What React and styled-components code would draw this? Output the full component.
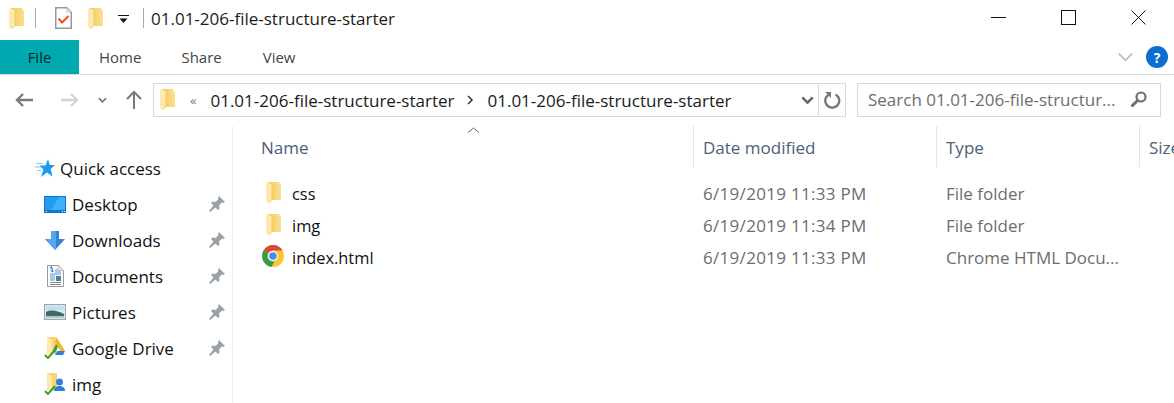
import React from 'react';
import styled, { createGlobalStyle } from 'styled-components';

const GlobalStyle = createGlobalStyle`
  html, body { margin: 0; padding: 0; background: #fff; }
  body { font-family: "Open Sans", "Noto Sans", sans-serif; overflow: hidden; }
`;

const Window = styled.div`
  width: 1174px;
  height: 403px;
  overflow: hidden;
  background: #fff;
  display: flex;
  flex-direction: column;
`;

const TitleBar = styled.div`
  height: 40px;
  display: flex;
  align-items: center;
  flex: none;
`;

const QuickTools = styled.div`
  display: flex;
  align-items: center;
  padding-left: 9px;
  margin-top: -4px;
`;

const ToolDivider = styled.span`
  width: 1px;
  height: 20px;
  background: #a8a8a8;
  margin: ${p => p.$margin};
`;

const Spacer = styled.span`
  width: ${p => p.$w}px;
  flex: none;
`;

const DropArrow = styled.svg`
  margin-left: 15px;
  margin-top: 3px;
`;

const WindowTitle = styled.div`
  font-size: 17px;
  color: #1c1c1c;
  margin-left: 7px;
  margin-top: -4px;
  flex: 1;
  white-space: nowrap;
`;

const WindowButtons = styled.div`
  display: flex;
  align-items: center;
  gap: 55px;
  padding-right: 28px;
  margin-top: -5px;
`;

const RibbonTabs = styled.div`
  height: 34px;
  display: flex;
  flex: none;
  align-items: center;
  border-bottom: 1px solid #dadbdc;
`;

const FileTab = styled.div`
  width: 79px;
  height: 34px;
  background: #00a8b0;
  color: #10282c;
  font-size: 15px;
  display: flex;
  align-items: center;
  justify-content: center;
  margin-right: 20px;
`;

const RibbonTab = styled.div`
  font-size: 15px;
  color: #444;
  margin-right: ${p => p.$gap}px;
`;

const RibbonRight = styled.div`
  margin-left: auto;
  display: flex;
  align-items: center;
  gap: 12px;
  padding-right: 6px;
`;

const HelpBadge = styled.div`
  width: 22px;
  height: 22px;
  border-radius: 50%;
  background: #0a6fd0;
  color: #fff;
  font-size: 14px;
  font-weight: 700;
  display: flex;
  align-items: center;
  justify-content: center;
`;

const NavRow = styled.div`
  height: 51px;
  flex: none;
  display: flex;
  align-items: center;
  padding-bottom: 2px;
  box-sizing: border-box;
`;

const NavButtons = styled.div`
  display: flex;
  align-items: center;
  width: 153px;
  padding-left: 14px;
  box-sizing: border-box;
`;

const UpArrow = styled.svg`
  margin-left: 19px;
`;

const AddressBox = styled.div`
  width: 693px;
  height: 34px;
  box-sizing: border-box;
  border: 1px solid #d9d9d9;
  display: flex;
  align-items: center;
  padding-left: 6px;
`;

const Crumb = styled.span`
  font-size: 17px;
  color: #1a1a1a;
  white-space: nowrap;
  padding-top: 1px;
`;

const CrumbOverflow = styled.span`
  font-size: 13px;
  color: #777;
  margin: 0 14px 0 15px;
`;

const CrumbSeparator = styled.svg`
  margin: 0 13px;
`;

const AddressEnd = styled.div`
  margin-left: auto;
  display: flex;
  align-items: center;
  height: 100%;
`;

const RefreshCell = styled.div`
  width: 26px;
  height: 100%;
  border-left: 1px solid #d9d9d9;
  display: flex;
  align-items: center;
  justify-content: center;
  margin-left: 4px;
`;

const SearchBox = styled.div`
  width: 304px;
  height: 34px;
  margin-left: 11px;
  box-sizing: border-box;
  border: 1px solid #d9d9d9;
  display: flex;
  align-items: center;
  justify-content: space-between;
  padding: 0 13px 0 10px;
  font-size: 17px;
  color: #6d6d6d;
  white-space: nowrap;
`;

const Body = styled.div`
  flex: 1;
  display: flex;
  min-height: 0;
`;

const Sidebar = styled.div`
  width: 233px;
  flex: none;
  box-sizing: border-box;
  border-right: 1px solid #f0f0f0;
  padding-top: 24px;
`;

const NavItem = styled.div`
  height: 36px;
  display: flex;
  align-items: center;
  padding-left: ${p => p.$indent}px;
  padding-right: 7px;
  font-size: 17px;
  color: #111;
  white-space: nowrap;
`;

const NavIcon = styled.span`
  width: ${p => p.$w}px;
  display: flex;
  justify-content: center;
  flex: none;
  margin-right: ${p => p.$gap || 0}px;
`;

const PinSlot = styled.span`
  margin-left: auto;
  display: flex;
`;

const Content = styled.div`
  flex: 1;
  position: relative;
  min-width: 0;
`;

const Columns = styled.div`
  display: grid;
  grid-template-columns: 460px 243px 203px 40px;
`;

const HeaderCell = styled.div`
  height: 41px;
  display: flex;
  align-items: center;
  padding-left: ${p => p.$pad}px;
  padding-top: 2px;
  font-size: 17px;
  color: #4c607a;
  box-sizing: border-box;
  white-space: nowrap;
  overflow: hidden;
  border-left: ${p => (p.$line ? '1px solid #e5e5e5' : 'none')};
`;

const SortCaret = styled.svg`
  position: absolute;
  left: 234px;
  top: 1px;
`;

const Rows = styled.div`
  margin-top: 10px;
`;

const FileRow = styled.div`
  display: grid;
  grid-template-columns: 460px 243px 203px 40px;
  height: 32px;
  align-items: center;
  font-size: 16.4px;
  white-space: nowrap;
`;

const NameCell = styled.div`
  display: flex;
  align-items: center;
  padding-left: 29px;
  color: #111;
`;

const RowIcon = styled.span`
  width: 22px;
  margin: -2px 8px 0 0;
  display: flex;
  justify-content: center;
  flex: none;
`;

const DateCell = styled.div`
  padding-left: 10px;
  color: #6d6d6d;
  font-size: 17px;
  letter-spacing: 0.3px;
`;

const TypeCell = styled.div`
  padding-left: 10px;
  color: #6d6d6d;
  font-size: 17px;
`;

const Folder = () => (
  <svg width="15" height="21" viewBox="0 0 15 21">
    <defs>
      <linearGradient id="folderBack" x1="0" y1="0" x2="1" y2="0">
        <stop offset="0" stopColor="#f2c95c" />
        <stop offset="1" stopColor="#fbe08f" />
      </linearGradient>
    </defs>
    <path d="M1 0h12.500v2.500H15V18H5.500V3z" fill="url(#folderBack)" />
    <path d="M0 .5L6 3.500V17.500L2.500 21 0 19z" fill="#fde9ae" />
    <path d="M6 3.500V17.500L2.500 21" fill="none" stroke="#eac560" strokeWidth=".8" />
  </svg>
);

const ChecklistDoc = () => (
  <svg width="17" height="22" viewBox="0 0 17 22">
    <path d="M.75.75h11l4.500 4.500v16H.75z" fill="#fff" stroke="#979797" strokeWidth="1.500" />
    <path d="M11.750.75v4.500h4.500z" fill="#e4e4e4" stroke="#bbb" strokeWidth=".6" />
    <path d="M3.500 11.500L7 15.500 13.500 9" fill="none" stroke="#e8551f" strokeWidth="2" />
  </svg>
);

const Pin = () => (
  <svg width="16" height="16" viewBox="0 0 16 16">
    <path d="M10 0l6 6-2 1-1-.500-3 3 .500 3-1.500 1.500-2.500-2.500L1 16l-1-1 4.500-5.500L2 7l1.500-1.500 3 .500 3-3L9 2z" fill="#98a0a8" />
  </svg>
);

const Star = () => (
  <svg width="20" height="18" viewBox="0 0 20 18">
    <path d="M1 4.500h7M0 8h6M2 11.500h4" stroke="#8cc9f3" strokeWidth="1" />
    <path d="M13 0l1.800 6H20l-4.300 4 1.800 7.500-5.500-4-6 4.500 2.400-7.500-3.900-4h6z" fill="#1c9bef" />
  </svg>
);

const DesktopIcon = () => (
  <svg width="22" height="17" viewBox="0 0 22 17">
    <rect width="22" height="17" fill="#0f77cf" />
    <path d="M1 1h20v13H1z" fill="#1f9df4" />
    <path d="M15 1h6v13H7z" fill="#49b4fa" opacity=".8" />
    <path d="M2 15.500h1M18 15.500h1M20 15.500h1" stroke="#fff" />
  </svg>
);

const DownloadsIcon = () => (
  <svg width="20" height="19" viewBox="0 0 20 19">
    <path d="M6 0h8v8h6L10 19 0 8h6z" fill="#2f83d8" />
    <path d="M6 0h5v19L0 8h6z" fill="#57a6ec" />
  </svg>
);

const DocumentsIcon = () => (
  <svg width="17" height="22" viewBox="0 0 17 22">
    <path d="M.5.500h11l5 5v16H.5z" fill="#fff" stroke="#9a9a9a" />
    <path d="M11.500.500v5h5z" fill="#e6e6e6" stroke="#aaa" strokeWidth=".6" />
    <path d="M3 3l1.500-1L6 7M3.500 6h3" fill="none" stroke="#2c7fd6" strokeWidth="1.200" />
    <path d="M8 5h3M8 7h6M3 9h11" stroke="#3f93dc" />
    <path d="M3 11h5M3 13h5M3 15h5" stroke="#4a94d8" />
    <path d="M9 11h5v5H9z" fill="#4f7f92" />
    <path d="M3 17.500h11M3 19.500h11" stroke="#8a8a8a" />
  </svg>
);

const PicturesIcon = () => (
  <svg width="22" height="16" viewBox="0 0 22 16">
    <rect x=".5" y=".5" width="21" height="15" fill="#d8e9f5" stroke="#a3a3a3" />
    <path d="M2 2h18v4H2z" fill="#c3ddf1" />
    <path d="M2 8c5-2.500 11-1.500 18 2v2H2z" fill="#3c6d5c" />
    <path d="M2 12h18v2H2z" fill="#a9c8d3" />
  </svg>
);

const SyncFolder = ({ badge }) => (
  <svg width="22" height="22" viewBox="0 0 22 22">
    <path d="M3 0h10v17H3z" fill="#f6d470" />
    <path d="M3 0l5 3v15l-5-2z" fill="#fdeaa8" />
    {badge === 'drive' ? (
      <>
        <path d="M13 1l8 13h-4.500L11 5z" fill="#f4b81f" />
        <path d="M11 18l2.500-4H21l-2 4z" fill="#2f7fe0" />
        <path d="M9 13l3-6 2 3-3 6z" fill="#30a14e" />
      </>
    ) : (
      <>
        <circle cx="15.500" cy="9" r="3.500" fill="#2f7fe0" />
        <path d="M10 18c0-3.500 2.500-5 5.500-5s5.500 1.500 5.500 5z" fill="#2f7fe0" />
      </>
    )}
    <path d="M1 18l3 3 7-8" fill="none" stroke="#3ea324" strokeWidth="2" />
  </svg>
);

const ChromeIcon = () => (
  <svg width="22" height="22" viewBox="0 0 22 22">
    <circle cx="11" cy="11" r="11" fill="#fbc62f" />
    <path d="M11 0a11 11 0 0 1 9.530 5.500H11a5.500 5.500 0 0 0-5 3.200L2.200 4.500A11 11 0 0 1 11 0z" fill="#d9483b" />
    <path d="M2.200 4.500L6 8.700a5.500 5.500 0 0 0 6.500 7.600L9.500 21.900A11 11 0 0 1 2.200 4.500z" fill="#2f9e4f" />
    <circle cx="11" cy="11" r="5" fill="#fff" />
    <circle cx="11" cy="11" r="3.800" fill="#4a8af0" />
  </svg>
);

const Chevron = ({ w = 10, h = 6, color = '#777', sw = 2 }) => (
  <svg width={w} height={h} viewBox="0 0 10 6">
    <path d="M1 1l4 4 4-4" fill="none" stroke={color} strokeWidth={sw} />
  </svg>
);

const Arrow = ({ color, flip }) => (
  <svg width="20" height="16" viewBox="0 0 20 16" style={flip ? { transform: 'scaleX(-1)' } : undefined}>
    <path d="M19 8H3M9 2L3 8l6 6" fill="none" stroke={color} strokeWidth="2.400" />
  </svg>
);

const navItems = [
  { label: 'Desktop', icon: <DesktopIcon />, pin: true },
  { label: 'Downloads', icon: <DownloadsIcon />, pin: true },
  { label: 'Documents', icon: <DocumentsIcon />, pin: true },
  { label: 'Pictures', icon: <PicturesIcon />, pin: true },
  { label: 'Google Drive', icon: <SyncFolder badge="drive" />, pin: true },
  { label: 'img', icon: <SyncFolder badge="user" /> },
];

const files = [
  { name: 'css', date: '6/19/2019 11:33 PM', type: 'File folder', icon: <Folder /> },
  { name: 'img', date: '6/19/2019 11:34 PM', type: 'File folder', icon: <Folder /> },
  { name: 'index.html', date: '6/19/2019 11:33 PM', type: 'Chrome HTML Docu...', icon: <ChromeIcon /> },
];

export default function App() {
  return (
    <Window>
      <GlobalStyle />
      <TitleBar>
        <QuickTools>
          <Folder />
          <ToolDivider $margin="0 19px 0 11px" />
          <ChecklistDoc />
          <Spacer $w={16} />
          <Folder />
          <DropArrow width="11" height="9" viewBox="0 0 11 9">
            <path d="M0 .5h11" stroke="#111" />
            <path d="M1.500 3.500h8L5.500 8z" fill="#111" />
          </DropArrow>
          <ToolDivider $margin="0 0 0 14px" />
        </QuickTools>
        <WindowTitle>01.01-206-file-structure-starter</WindowTitle>
        <WindowButtons>
          <svg width="15" height="2"><rect width="15" height="1" fill="#111" /></svg>
          <svg width="15" height="15"><rect x=".5" y=".5" width="14" height="14" fill="none" stroke="#111" /></svg>
          <svg width="15" height="15"><path d="M.5.500l14 14M14.500.500l-14 14" stroke="#111" /></svg>
        </WindowButtons>
      </TitleBar>

      <RibbonTabs>
        <FileTab>File</FileTab>
        <RibbonTab $gap={40}>Home</RibbonTab>
        <RibbonTab $gap={41}>Share</RibbonTab>
        <RibbonTab $gap={0}>View</RibbonTab>
        <RibbonRight>
          <Chevron w={17} h={10} color="#bbb" sw={1} />
          <HelpBadge>?</HelpBadge>
        </RibbonRight>
      </RibbonTabs>

      <NavRow>
        <NavButtons>
          <Arrow color="#7a7a7a" />
          <Spacer $w={26} />
          <Arrow color="#d4d4d4" flip />
          <Spacer $w={18} />
          <Chevron w={9} h={6} color="#7a7a7a" />
          <UpArrow width="16" height="19" viewBox="0 0 16 19">
            <path d="M8 19V2M1 9l7-7 7 7" fill="none" stroke="#7a7a7a" strokeWidth="2" />
          </UpArrow>
        </NavButtons>
        <AddressBox>
          <Folder />
          <CrumbOverflow>«</CrumbOverflow>
          <Crumb>01.01-206-file-structure-starter</Crumb>
          <CrumbSeparator width="7" height="10" viewBox="0 0 7 10">
            <path d="M1 1l4 4-4 4" fill="none" stroke="#333" strokeWidth="1.500" />
          </CrumbSeparator>
          <Crumb>01.01-206-file-structure-starter</Crumb>
          <AddressEnd>
            <Chevron w={13} h={8} color="#666" sw={2} />
            <RefreshCell>
              <svg width="18" height="18" viewBox="0 0 18 18">
                <path d="M6 3.500a7 7 0 1 0 6.500 0" fill="none" stroke="#7a7a7a" strokeWidth="2.400" />
                <path d="M2 1h6v6z" fill="#7a7a7a" />
              </svg>
            </RefreshCell>
          </AddressEnd>
        </AddressBox>
        <SearchBox>
          Search 01.01-206-file-structur...
          <svg width="17" height="17" viewBox="0 0 17 17">
            <circle cx="11" cy="6" r="4.500" fill="none" stroke="#6f6f6f" strokeWidth="2.200" />
            <path d="M7.500 9.500L1.500 15.500" stroke="#6f6f6f" strokeWidth="3" />
          </svg>
        </SearchBox>
      </NavRow>

      <Body>
        <Sidebar>
          <NavItem $indent={35}>
            <NavIcon $w={20} $gap={5}><Star /></NavIcon>
            Quick access
          </NavItem>
          {navItems.map(item => (
            <NavItem key={item.label} $indent={44}>
              <NavIcon $w={22} $gap={6}>{item.icon}</NavIcon>
              {item.label}
              {item.pin && <PinSlot><Pin /></PinSlot>}
            </NavItem>
          ))}
        </Sidebar>
        <Content>
          <SortCaret width="13" height="6" viewBox="0 0 13 6">
            <path d="M1 5.500L6.500 1 12 5.500" fill="none" stroke="#666" />
          </SortCaret>
          <Columns>
            <HeaderCell $pad={28}>Name</HeaderCell>
            <HeaderCell $pad={9} $line>Date modified</HeaderCell>
            <HeaderCell $pad={9} $line>Type</HeaderCell>
            <HeaderCell $pad={9} $line>Size</HeaderCell>
          </Columns>
          <Rows>
            {files.map(f => (
              <FileRow key={f.name}>
                <NameCell>
                  <RowIcon>{f.icon}</RowIcon>
                  {f.name}
                </NameCell>
                <DateCell>{f.date}</DateCell>
                <TypeCell>{f.type}</TypeCell>
              </FileRow>
            ))}
          </Rows>
        </Content>
      </Body>
    </Window>
  );
}
